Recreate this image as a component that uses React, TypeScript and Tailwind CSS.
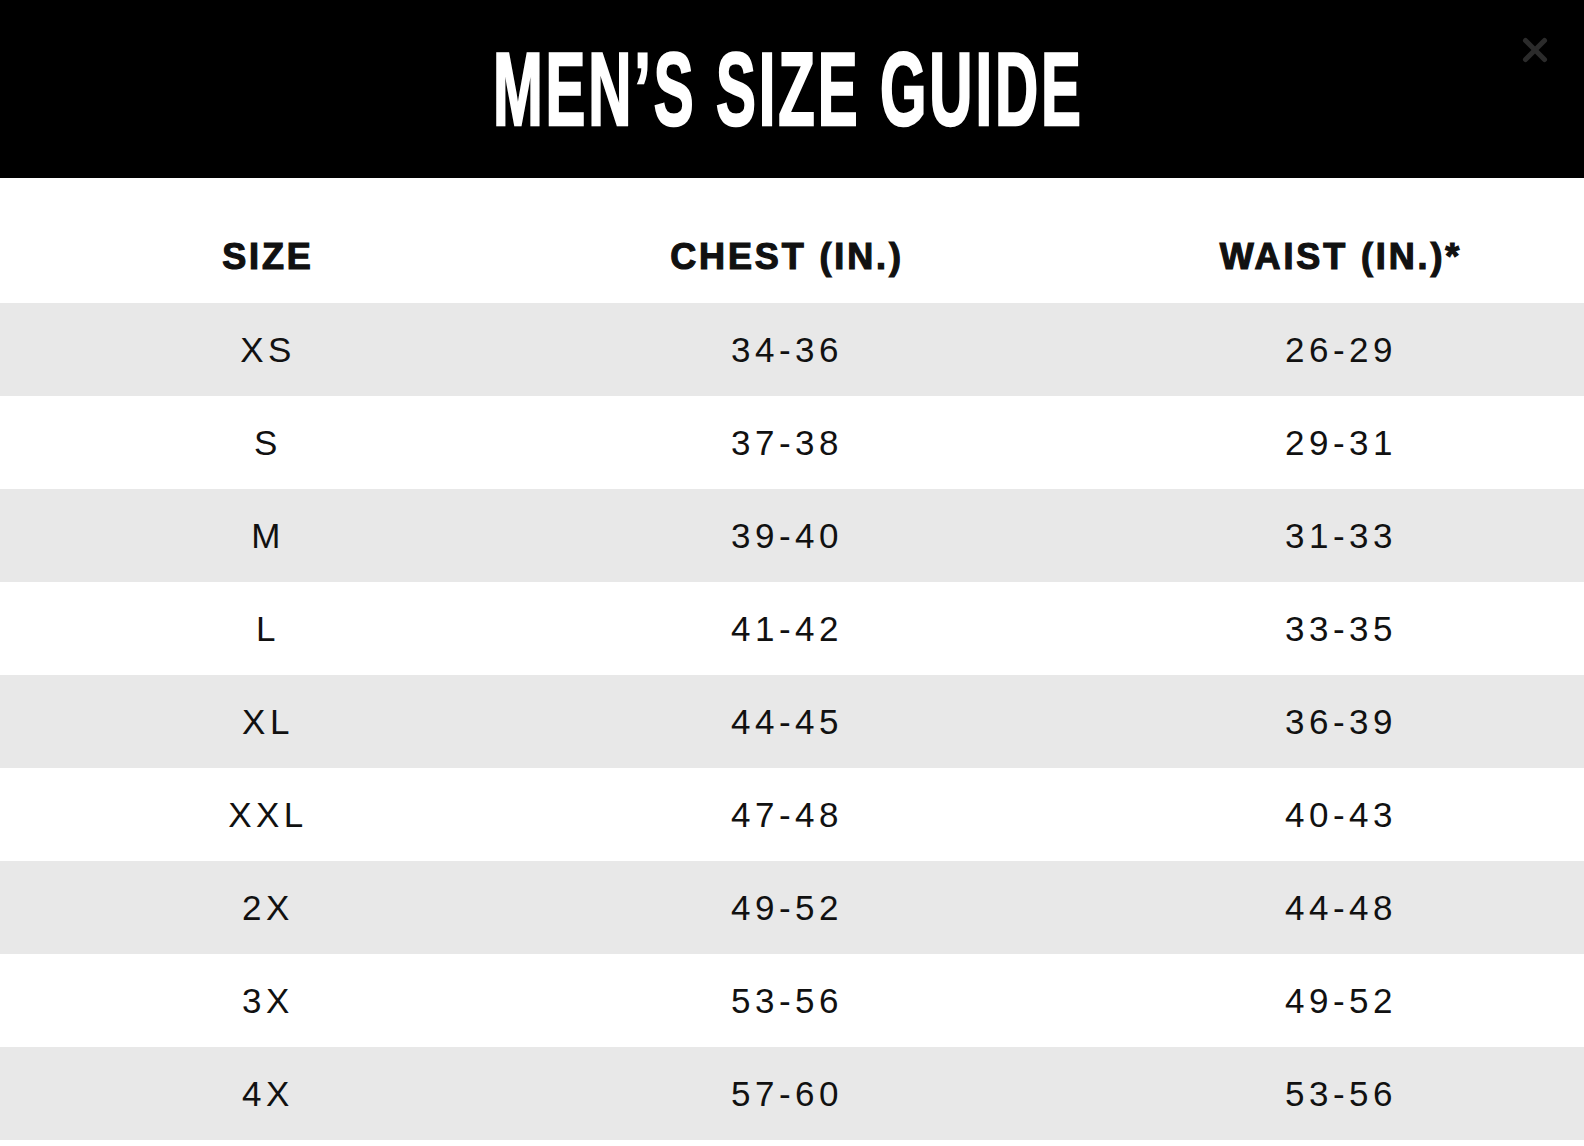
import { X } from 'lucide-react';

const ROWS: [string, string, string][] = [
  ['XS', '34-36', '26-29'],
  ['S', '37-38', '29-31'],
  ['M', '39-40', '31-33'],
  ['L', '41-42', '33-35'],
  ['XL', '44-45', '36-39'],
  ['XXL', '47-48', '40-43'],
  ['2X', '49-52', '44-48'],
  ['3X', '53-56', '49-52'],
  ['4X', '57-60', '53-56'],
];

const GRID = 'grid grid-cols-[536px_502px_1fr]';

export default function App() {
  return (
    <div className="min-h-[1146px] bg-white font-['Liberation_Sans',Arial,sans-serif] text-[#111]">
      <header className="relative flex h-[178px] items-center justify-center bg-black">
        <h1 className="mr-[8px] inline-block scale-x-[0.58] text-[103px] font-bold leading-none tracking-[5px] text-white [-webkit-text-stroke:2.5px_white]">
          MEN’S SIZE GUIDE
        </h1>
        <button className="absolute right-[30px] top-[31px] text-[#2b2b2b]" aria-label="Close">
          <X className="h-[38px] w-[38px]" strokeWidth={3.2} />
        </button>
      </header>

      <div className={`${GRID} h-[125px] items-center pt-[32px] text-[36px] font-bold leading-none tracking-[0.08em] [-webkit-text-stroke:1.2px_#111]`}>
        <div className="text-center">SIZE</div>
        <div className="text-center">CHEST (IN.)</div>
        <div className="pl-[60px] text-center">WAIST (IN.)*</div>
      </div>

      {ROWS.map(([size, chest, waist], i) => (
        <div
          key={size}
          className={`${GRID} h-[93px] items-center text-[35px] leading-none tracking-[4.5px] ${i % 2 === 0 ? 'bg-[#e8e8e8]' : 'bg-white'}`}
        >
          <div className="text-center">{size}</div>
          <div className="text-center">{chest}</div>
          <div className="pl-[60px] text-center">{waist}</div>
        </div>
      ))}
    </div>
  );
}
